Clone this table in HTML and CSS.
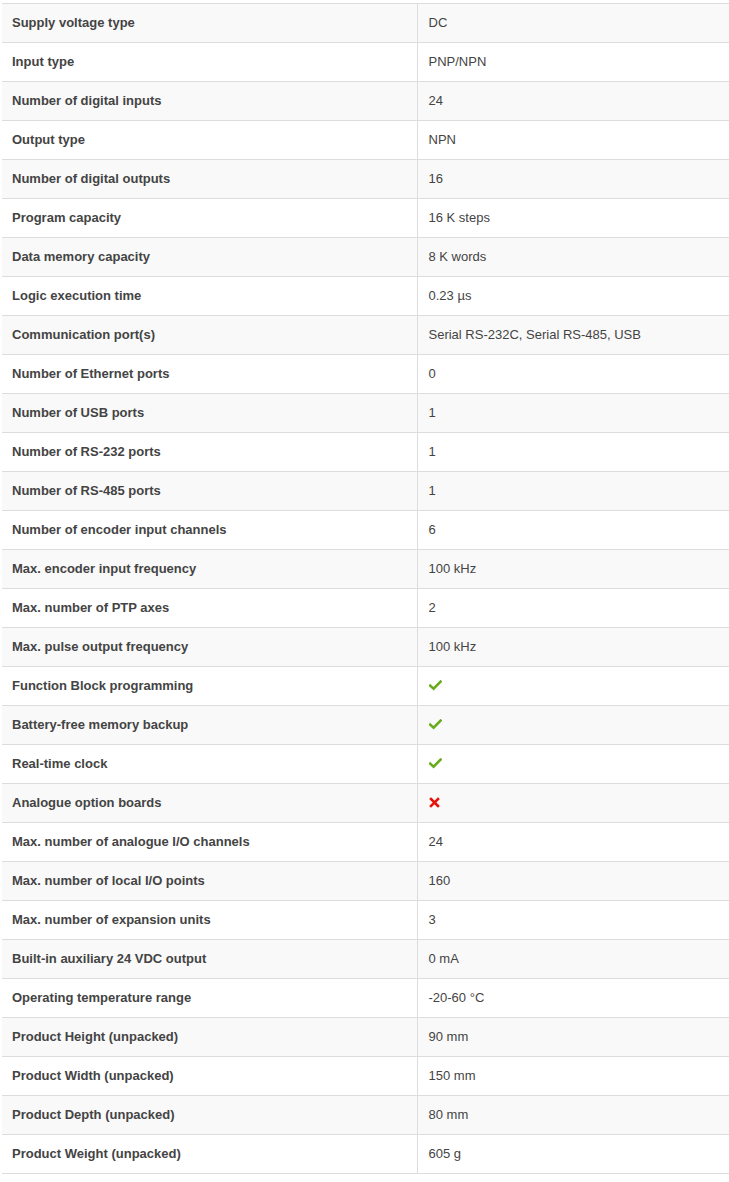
FILE: index.html
```html
<!DOCTYPE html>
<html>
<head>
<meta charset="utf-8">
<link rel="stylesheet" href="styles.css">
</head>
<body>
<table class="specs">
<tbody>
<tr><th>Supply voltage type</th><td>DC</td></tr>
<tr><th>Input type</th><td>PNP/NPN</td></tr>
<tr><th>Number of digital inputs</th><td>24</td></tr>
<tr><th>Output type</th><td>NPN</td></tr>
<tr><th>Number of digital outputs</th><td>16</td></tr>
<tr><th>Program capacity</th><td>16 K steps</td></tr>
<tr><th>Data memory capacity</th><td>8 K words</td></tr>
<tr><th>Logic execution time</th><td>0.23 µs</td></tr>
<tr><th>Communication port(s)</th><td>Serial RS-232C, Serial RS-485, USB</td></tr>
<tr><th>Number of Ethernet ports</th><td>0</td></tr>
<tr><th>Number of USB ports</th><td>1</td></tr>
<tr><th>Number of RS-232 ports</th><td>1</td></tr>
<tr><th>Number of RS-485 ports</th><td>1</td></tr>
<tr><th>Number of encoder input channels</th><td>6</td></tr>
<tr><th>Max. encoder input frequency</th><td>100 kHz</td></tr>
<tr><th>Max. number of PTP axes</th><td>2</td></tr>
<tr><th>Max. pulse output frequency</th><td>100 kHz</td></tr>
<tr><th>Function Block programming</th><td><svg class="icon" width="13" height="11" viewBox="0 0 13 11"><path d="M1.2 5.6 L4.6 8.6 L11.6 1.6" fill="none" stroke="#6aab1d" stroke-width="2.6" stroke-linecap="square"/></svg></td></tr>
<tr><th>Battery-free memory backup</th><td><svg class="icon" width="13" height="11" viewBox="0 0 13 11"><path d="M1.2 5.6 L4.6 8.6 L11.6 1.6" fill="none" stroke="#6aab1d" stroke-width="2.6" stroke-linecap="square"/></svg></td></tr>
<tr><th>Real-time clock</th><td><svg class="icon" width="13" height="11" viewBox="0 0 13 11"><path d="M1.2 5.6 L4.6 8.6 L11.6 1.6" fill="none" stroke="#6aab1d" stroke-width="2.6" stroke-linecap="square"/></svg></td></tr>
<tr><th>Analogue option boards</th><td><svg class="icon" width="11" height="11" viewBox="0 0 11 11"><path d="M2 2 L9 9 M9 2 L2 9" fill="none" stroke="#e8120c" stroke-width="2.6" stroke-linecap="square"/></svg></td></tr>
<tr><th>Max. number of analogue I/O channels</th><td>24</td></tr>
<tr><th>Max. number of local I/O points</th><td>160</td></tr>
<tr><th>Max. number of expansion units</th><td>3</td></tr>
<tr><th>Built-in auxiliary 24 VDC output</th><td>0 mA</td></tr>
<tr><th>Operating temperature range</th><td>-20-60 °C</td></tr>
<tr><th>Product Height (unpacked)</th><td>90 mm</td></tr>
<tr><th>Product Width (unpacked)</th><td>150 mm</td></tr>
<tr><th>Product Depth (unpacked)</th><td>80 mm</td></tr>
<tr><th>Product Weight (unpacked)</th><td>605 g</td></tr>
</tbody>
</table>
</body>
</html>
```
FILE: styles.css
```css
html, body {
  margin: 0;
  padding: 0;
  background: #fff;
}
body {
  padding: 3px 0 0 2px;
  font-family: "Liberation Sans", Arial, sans-serif;
  font-size: 13px;
  color: #444;
}
.specs {
  width: 727px;
  border-collapse: collapse;
  table-layout: fixed;
}
.specs tr {
  border-top: 1px solid #ddd;
  border-bottom: 1px solid #ddd;
}
.specs tr:nth-child(odd) {
  background: #f9f9f9;
}
.specs th,
.specs td {
  height: 39px;
  padding: 0 10px 2px;
  text-align: left;
  vertical-align: middle;
  box-sizing: border-box;
}
.specs th {
  width: 415px;
  font-weight: bold;
  color: #444;
  border-right: 1px solid #ddd;
}
.specs td {
  font-weight: normal;
  padding-left: 11px;
}
.icon {
  display: block;
}
```
